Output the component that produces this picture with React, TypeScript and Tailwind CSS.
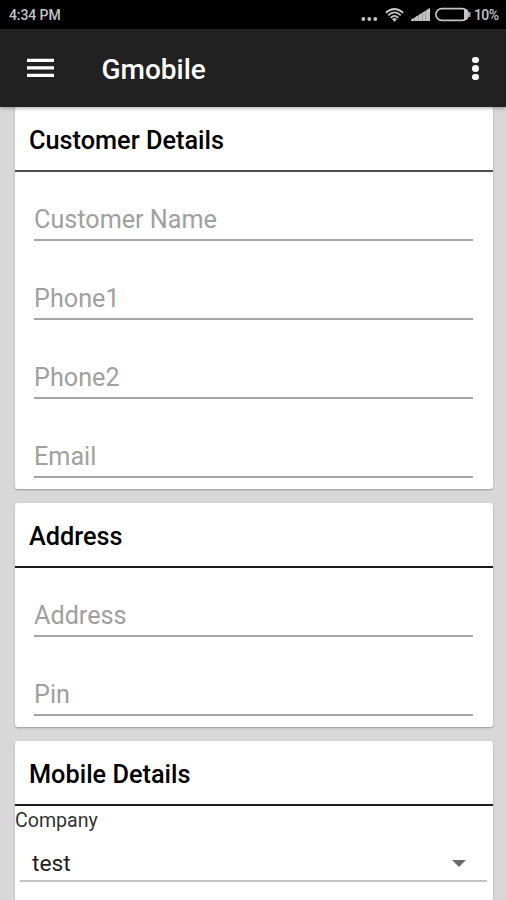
type FormSection = {
  title: string
  fields: string[]
  divider: string
}

const sections: FormSection[] = [
  {
    title: 'Customer Details',
    fields: ['Customer Name', 'Phone1', 'Phone2', 'Email'],
    divider: 'border-[#4d4d4d]',
  },
  { title: 'Address', fields: ['Address', 'Pin'], divider: 'border-[#1c1c1c]' },
]

function StatusBar() {
  return (
    <div className="flex h-[29px] items-center bg-black pr-2 pl-[9px] text-[#c4c4c4]">
      <span className="pt-px text-[14px] leading-none font-medium tracking-[-0.1px]">4:34 PM</span>
      <svg className="mt-[8px] ml-auto h-1 w-[17px]" viewBox="0 0 17 4" fill="currentColor">
        <circle cx="2.3" cy="2" r="1.9" />
        <circle cx="8.3" cy="2" r="1.9" />
        <circle cx="14.3" cy="2" r="1.9" />
      </svg>
      <svg className="ml-[7px] h-[14px] w-[19px]" viewBox="0 0 19 14" fill="none" stroke="currentColor" strokeWidth="1.8">
        <path d="M0.8 4.8Q9.5-2.8 18.2 4.8" />
        <path d="M3.2 7.3Q9.5 1.5 15.8 7.3" />
        <path d="M5.6 9.8Q9.5 5.9 13.4 9.8" />
        <path d="M7 11Q9.5 9 12 11L9.5 13.9Z" fill="currentColor" stroke="none" />
      </svg>
      <svg className="ml-[7px] h-[13px] w-[19px]" viewBox="0 0 19 13" fill="currentColor">
        <path d="M0 13V12L19 0V13Z" fillOpacity="0.6" />
        <path d="M0 13V11.8L3.5 9.6V13ZM4 13V9.2L7.2 7.3V13ZM7.7 13V7L11 5V13ZM11.5 13V4.6L14.6 2.7V13ZM15.1 13V2.3L19 0V13Z" />
      </svg>
      <svg className="ml-[5px] h-[15px] w-[36px]" viewBox="0 0 36 15" fill="none" stroke="currentColor">
        <rect x="0.9" y="1.6" width="32.2" height="11.8" rx="5.9" strokeWidth="1.7" />
        <path d="M29 2V13H31Q33.5 12 33.5 9V6Q33.5 3 31 2Z" fill="currentColor" stroke="none" />
        <path d="M34.8 5V10" strokeWidth="1.3" />
      </svg>
      <span className="ml-[3px] w-[24px] pt-px text-[14px] leading-none font-medium tracking-[-0.6px]">10%</span>
    </div>
  )
}

function AppBar() {
  return (
    <header className="relative z-10 flex h-[78px] items-center bg-[#212121] pr-[27px] pl-[26.5px] text-white shadow-[0_1px_4px_rgba(0,0,0,0.35)]">
      <svg className="h-[20px] w-[27px]" viewBox="0 0 27 20" fill="currentColor" role="img" aria-label="Menu">
        <path d="M0 0.7H27V4.1H0ZM0 8.2H27V11.6H0ZM0 15.7H27V19.1H0Z" />
      </svg>
      <h1 className="mt-[3px] ml-[48px] text-[28px] leading-8 font-medium">Gmobile</h1>
      <button type="button" aria-label="More options" className="ml-auto flex w-[7px] flex-col gap-[2px] pt-px">
        <span className="h-[6.5px] w-[6.5px] rounded-full bg-white" />
        <span className="h-[6.5px] w-[6.5px] rounded-full bg-white" />
        <span className="h-[6.5px] w-[6.5px] rounded-full bg-white" />
      </button>
    </header>
  )
}

function CardTitle({ title, divider }: { title: string; divider: string }) {
  return (
    <h2 className={`flex h-[65px] items-center border-b-2 pt-[5px] pl-[14px] text-[25.3px] font-medium text-black ${divider}`}>
      {title}
    </h2>
  )
}

function Field({ label }: { label: string }) {
  return (
    <div className="flex h-[69px] items-end border-b-2 border-[#a6a6a6] pb-[4px] text-[25.2px] leading-[30px] text-[#a0a0a0]">
      {label}
    </div>
  )
}

export default function App() {
  return (
    <div className="h-[900px] w-[506px] overflow-hidden bg-[#d8d8d8] font-['Roboto',sans-serif]">
      <StatusBar />
      <AppBar />
      <main className="flex flex-col gap-[14px] pr-[13px] pl-[15px]">
        {sections.map((section) => (
          <section key={section.title} className="rounded-[3px] bg-white pb-[11px] shadow-[0_1px_2px_rgba(0,0,0,0.3)]">
            <CardTitle title={section.title} divider={section.divider} />
            <div className="flex flex-col gap-[10px] pr-5 pl-[19px]">
              {section.fields.map((field) => (
                <Field key={field} label={field} />
              ))}
            </div>
          </section>
        ))}

        <section className="h-[200px] rounded-[3px] bg-white shadow-[0_1px_2px_rgba(0,0,0,0.3)]">
          <CardTitle title="Mobile Details" divider="border-[#1c1c1c]" />
          <p className="pt-px text-[19.6px] leading-[28px] text-[#333333]">Company</p>
          <div className="mr-[6px] ml-[5px] flex h-[47px] items-center justify-between border-b-2 border-[#c4c4c4] pt-[12px] pr-[21px] pl-3 text-[22.8px] text-[#212121]">
            <span className="pt-px">test</span>
            <svg className="h-[7px] w-[14px]" viewBox="0 0 14 7" fill="#6b6b6b">
              <path d="M0 0H14L7 7Z" />
            </svg>
          </div>
        </section>
      </main>
    </div>
  )
}
